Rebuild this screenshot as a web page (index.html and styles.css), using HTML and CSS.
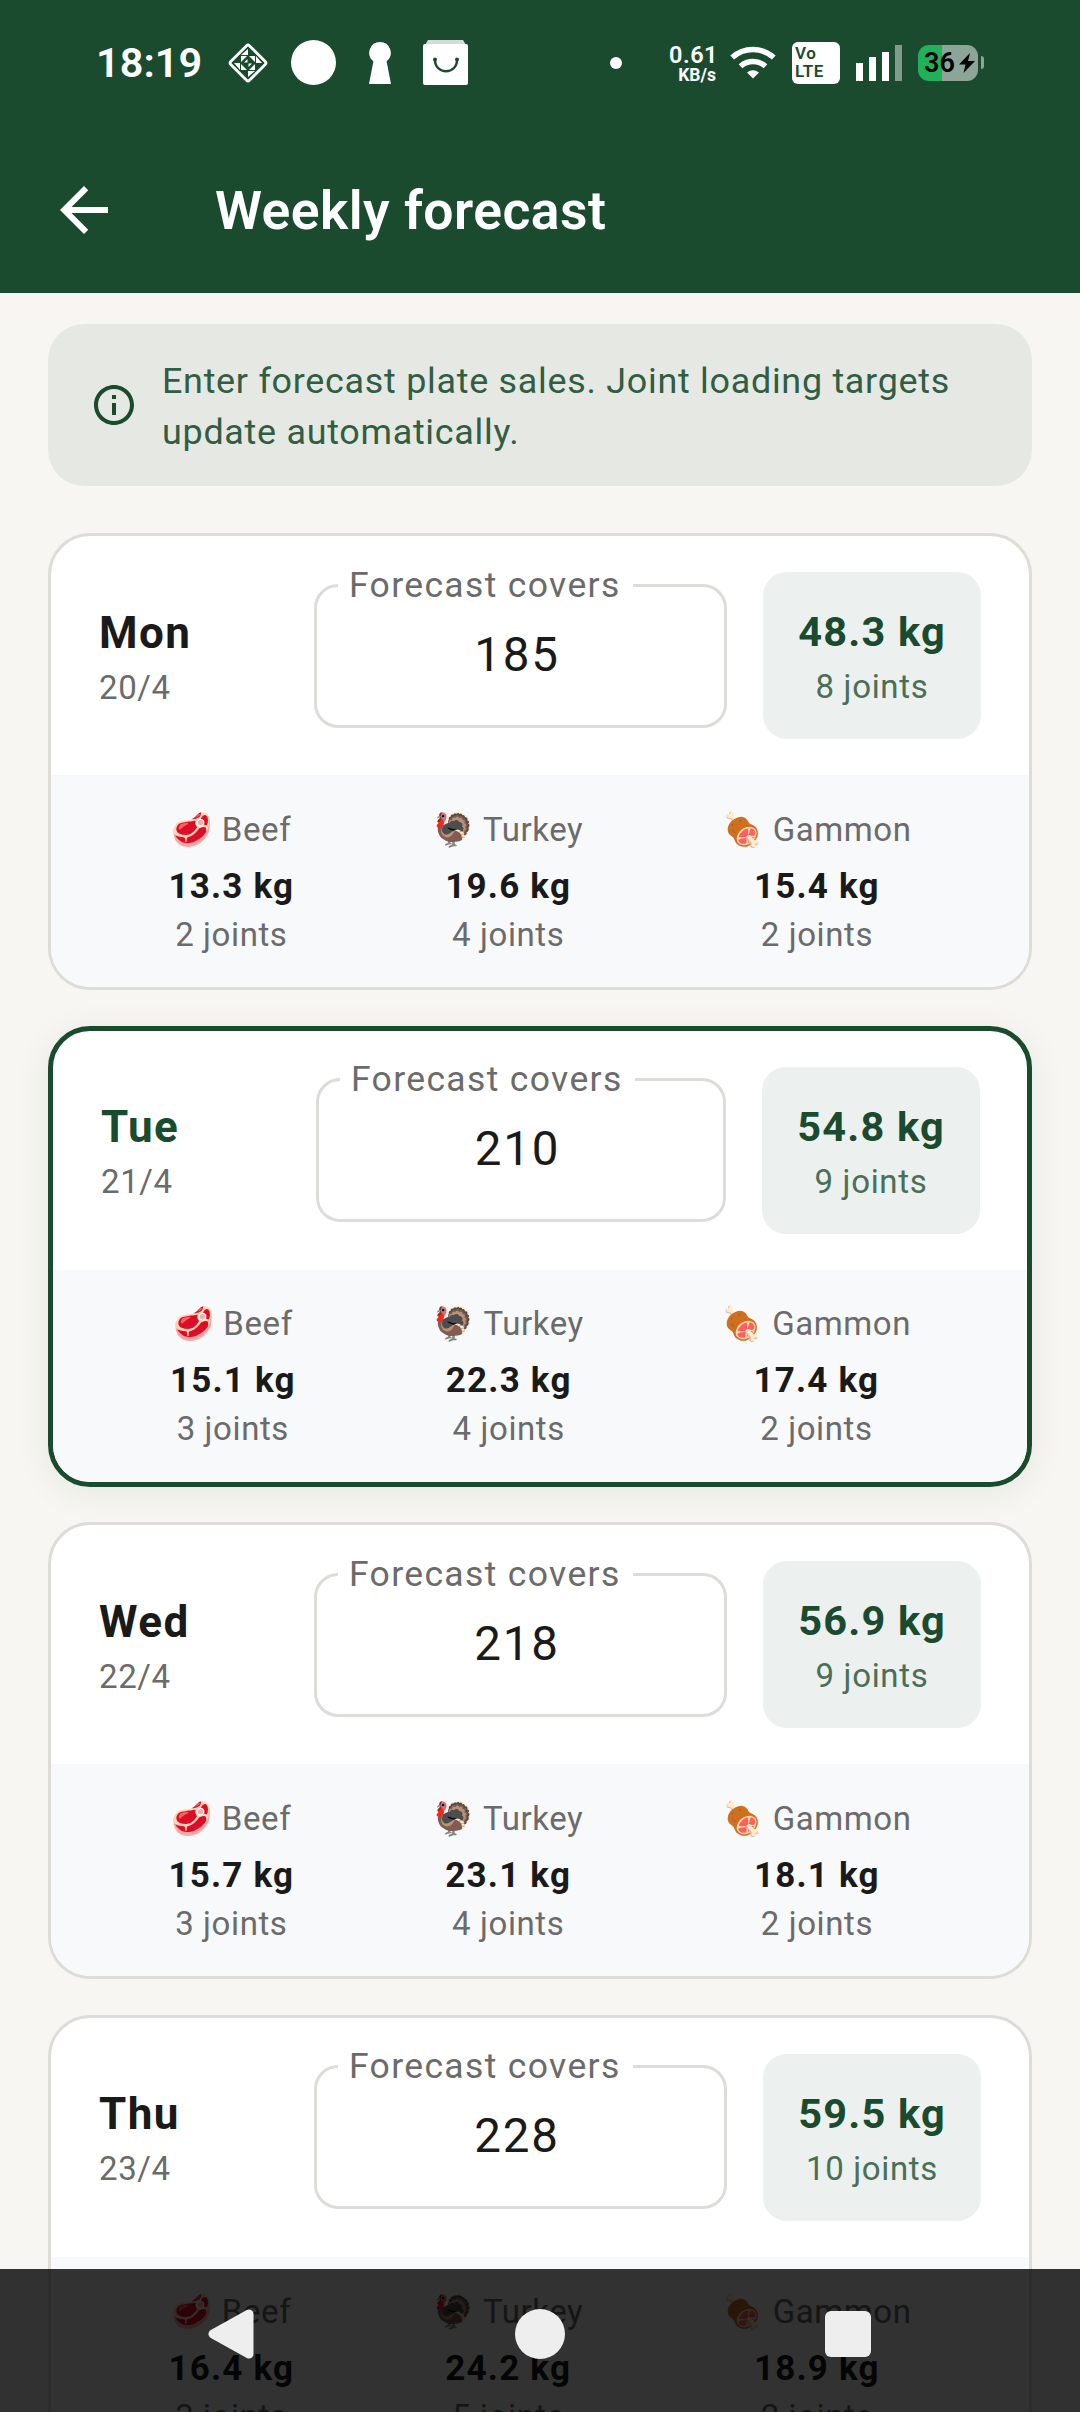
FILE: index.html
```
<!DOCTYPE html>
<html lang="en">

<head>
  <meta charset="UTF-8">
  <meta name="viewport" content="width=device-width, initial-scale=1.0">
  <title>Weekly forecast</title>
  <link rel="stylesheet" href="styles.css">
</head>

<body>
  <header>
    <div class="status">
      <span class="time">18:19</span>
      <svg class="s-diamond" width="42" height="42" viewBox="-21 -21 42 42">
        <rect x="-13.2" y="-13.2" width="26.4" height="26.4" rx="2" transform="rotate(45)" fill="none" stroke="#fff" stroke-width="2.8" />
        <path fill="#fff" d="M0-14v6h-7zM14 0H8v-7zM0 14V8h7zM-14 0h6v7zM-7-7h6l-6 6zM7-7v6L1-7zM7 7H1l6-6zM-7 7V1l6 6zM-4-.5l3.5-3.5v3.5zM4 .5L.5 4V.5z" />
      </svg>
      <i class="s-circle"></i>
      <svg class="s-key" width="22" height="42" viewBox="0 0 22 42">
        <path fill="#fff" d="M11 0a10.8 10.8 0 0 1 6.6 19.3L22 42H0l4.4-22.7A10.8 10.8 0 0 1 11 0z" />
      </svg>
      <svg class="s-bag" width="45" height="45" viewBox="0 0 45 45">
        <path fill="#d3dcd6" d="M5 0h35l3 5H2z" />
        <rect y="4" width="45" height="41" rx="2" fill="#fff" />
        <path d="M12 20c0 15 22 15 22 0" fill="none" stroke="#1b4b2f" stroke-width="2.4" />
        <circle cx="12" cy="19.5" r="2" fill="#1b4b2f" />
        <circle cx="34" cy="19.5" r="2" fill="#1b4b2f" />
      </svg>

      <i class="s-dot"></i>
      <div class="speed">
        <b>0.61</b>
        <small>KB/s</small>
      </div>
      <svg class="s-wifi" width="46" height="33" viewBox="0 0 46 33">
        <path d="M2.2 11.5a31 31 0 0 1 41.6 0" fill="none" stroke="#fff" stroke-width="5.5" />
        <path d="M10.5 20.2a19 19 0 0 1 25 0" fill="none" stroke="#fff" stroke-width="5.5" />
        <path d="M17 26.5q6-4.5 12 0l-6 6z" fill="#fff" />
      </svg>
      <div class="volte"><span>Vo</span><span>LTE</span></div>
      <svg class="s-signal" width="46" height="36" viewBox="0 0 46 36">
        <path fill="#fff" d="M0 18h7v18H0zM13 12h7v24h-7zM26 7h7v29h-7z" />
        <path fill="#fff" opacity=".45" d="M39 0h7v36h-7z" />
      </svg>
      <div class="battery">
        <span>36</span>
        <svg width="16" height="20" viewBox="0 0 16 20">
          <path d="M11 0L0 11.5h6.5L4.5 20 16 8H9z" />
        </svg>
      </div>
      <i class="battery-tip"></i>
    </div>
    <div class="bar">
      <svg width="72" height="72" viewBox="0 0 24 24">
        <path fill="#fff" d="M20 11H7.83l5.59-5.59L12 4l-8 8 8 8 1.41-1.41L7.83 13H20v-2z" />
      </svg>
      <h1>Weekly forecast</h1>
    </div>
  </header>

  <main>
    <div class="info">
      <svg width="48" height="48" viewBox="0 0 24 24">
        <path fill="#1b4b2f" d="M11 7h2v2h-2zm0 4h2v6h-2zm1-9C6.48 2 2 6.48 2 12s4.48 10 10 10 10-4.48 10-10S17.52 2 12 2zm0 18c-4.41 0-8-3.59-8-8s3.59-8 8-8 8 3.59 8 8-3.59 8-8 8z" />
      </svg>
      <p>Enter forecast plate sales. Joint loading targets update automatically.</p>
    </div>

    <div class="card">
      <div class="top">
        <div class="day">
          <h2>Mon</h2>
          <p>20/4</p>
        </div>
        <div class="field">
          <label>Forecast covers</label>
          <span>185</span>
        </div>
        <div class="total">
          <b>48.3 kg</b>
          <p>8 joints</p>
        </div>
      </div>
      <ul class="meats">
        <li><p>🥩 Beef</p><b>13.3 kg</b><p>2 joints</p></li>
        <li><p>🦃 Turkey</p><b>19.6 kg</b><p>4 joints</p></li>
        <li><p>🍖 Gammon</p><b>15.4 kg</b><p>2 joints</p></li>
      </ul>
    </div>

    <div class="card active">
      <div class="top">
        <div class="day">
          <h2>Tue</h2>
          <p>21/4</p>
        </div>
        <div class="field">
          <label>Forecast covers</label>
          <span>210</span>
        </div>
        <div class="total">
          <b>54.8 kg</b>
          <p>9 joints</p>
        </div>
      </div>
      <ul class="meats">
        <li><p>🥩 Beef</p><b>15.1 kg</b><p>3 joints</p></li>
        <li><p>🦃 Turkey</p><b>22.3 kg</b><p>4 joints</p></li>
        <li><p>🍖 Gammon</p><b>17.4 kg</b><p>2 joints</p></li>
      </ul>
    </div>

    <div class="card">
      <div class="top">
        <div class="day">
          <h2>Wed</h2>
          <p>22/4</p>
        </div>
        <div class="field">
          <label>Forecast covers</label>
          <span>218</span>
        </div>
        <div class="total">
          <b>56.9 kg</b>
          <p>9 joints</p>
        </div>
      </div>
      <ul class="meats">
        <li><p>🥩 Beef</p><b>15.7 kg</b><p>3 joints</p></li>
        <li><p>🦃 Turkey</p><b>23.1 kg</b><p>4 joints</p></li>
        <li><p>🍖 Gammon</p><b>18.1 kg</b><p>2 joints</p></li>
      </ul>
    </div>

    <div class="card">
      <div class="top">
        <div class="day">
          <h2>Thu</h2>
          <p>23/4</p>
        </div>
        <div class="field">
          <label>Forecast covers</label>
          <span>228</span>
        </div>
        <div class="total">
          <b>59.5 kg</b>
          <p>10 joints</p>
        </div>
      </div>
      <ul class="meats">
        <li><p>🥩 Beef</p><b>16.4 kg</b><p>3 joints</p></li>
        <li><p>🦃 Turkey</p><b>24.2 kg</b><p>5 joints</p></li>
        <li><p>🍖 Gammon</p><b>18.9 kg</b><p>2 joints</p></li>
      </ul>
    </div>
  </main>

  <nav>
    <svg width="46" height="50" viewBox="0 0 46 50">
      <path d="M41 5v40L5 25z" fill="#eee" stroke="#eee" stroke-width="9" stroke-linejoin="round" />
    </svg>
    <svg width="50" height="50" viewBox="0 0 50 50">
      <circle cx="25" cy="25" r="25" fill="#eee" />
    </svg>
    <svg width="46" height="46" viewBox="0 0 46 46">
      <rect width="46" height="46" rx="6" fill="#eee" />
    </svg>
  </nav>
</body>

</html>
```
FILE: styles.css
```
* {
  margin: 0;
  padding: 0;
  box-sizing: border-box;
}

ul {
  list-style: none;
}

svg {
  display: block;
  flex: none;
}

body {
  height: 2412px;
  overflow: hidden;
  background: #f7f6f2;
  color: #1a1a1a;
  font-family: Roboto, "Noto Color Emoji", sans-serif;
}

header {
  height: 293px;
  background: #1b4b2f;
  color: #fff;
}

/* status bar */
.status {
  display: flex;
  align-items: center;
  height: 125px;
  padding: 0 96px;
}

.time {
  width: 131px;
  font-size: 41.5px;
  font-weight: 600;
  line-height: 50px;
}

.s-circle {
  width: 45px;
  height: 45px;
  margin: 0 33px 0 22px;
  border-radius: 50%;
  background: #fff;
}

.s-bag {
  margin-left: 32px;
}

.s-dot {
  width: 12px;
  height: 12px;
  margin-left: auto;
  border-radius: 50%;
  background: #fff;
}

.speed {
  width: 96px;
  margin-right: 12px;
  text-align: right;
}

.speed b {
  display: block;
  padding-top: 5px;
  font-size: 23.5px;
  font-weight: 600;
  line-height: 20px;
  letter-spacing: .5px;
}

.speed small {
  display: block;
  padding-right: 2px;
  font-size: 17.5px;
  font-weight: 700;
  line-height: 20px;
}

.volte {
  width: 48px;
  height: 42px;
  margin: 0 16px;
  padding: 2px 0 0 3px;
  border-radius: 6px;
  background: #fff;
  color: #1b4b2f;
  font-size: 17px;
  font-weight: 600;
  line-height: 18.5px;
  letter-spacing: .6px;
}

.volte span {
  display: block;
}

.battery {
  display: flex;
  align-items: center;
  width: 60px;
  height: 36px;
  margin-left: 16px;
  padding-left: 6px;
  border-radius: 11px;
  background: linear-gradient(90deg, #1fb25a 24px, #8ca596 24px);
  color: #000;
  font-size: 27px;
  font-weight: 600;
  line-height: 36px;
}

.battery svg {
  margin-left: 4px;
}

.battery-tip {
  width: 3px;
  height: 13px;
  margin-left: 3px;
  border-radius: 0 3px 3px 0;
  background: #8ca596;
}

/* app bar */
.bar {
  display: flex;
  align-items: center;
  gap: 95px;
  height: 168px;
  padding: 2px 48px 0;
}

.bar h1 {
  font-size: 53.5px;
  font-weight: 600;
  letter-spacing: .45px;
}

main {
  padding: 31px 48px 0;
}

.info {
  display: flex;
  align-items: center;
  gap: 24px;
  height: 162px;
  margin-bottom: 47px;
  padding: 0 42px;
  border-radius: 36px;
  background: #e6e9e3;
}

.info p {
  padding-top: 3px;
  color: #315d43;
  font-size: 35.9px;
  line-height: 51px;
  letter-spacing: .72px;
}

/* day cards */
.card {
  margin-bottom: 35.6px;
  overflow: hidden;
  border: 3px solid #dedcd8;
  border-radius: 42px;
  background: #fff;
}

.card.active {
  border: 5px solid #1b4b2f;
  box-shadow: 0 6px 36px rgba(27, 50, 30, .07);
}

.active h2 {
  color: #1b4b2f;
}

.top {
  display: grid;
  grid-template-columns: 179px 1fr 218px;
  gap: 36px;
  align-items: center;
  height: 239px;
  padding: 0 48px;
}

.active .top {
  padding-right: 47px;
}

.day h2 {
  font-size: 44px;
  font-weight: 700;
  line-height: 64px;
  letter-spacing: 1.4px;
}

.day p {
  color: #6b6b6b;
  font-size: 33px;
  line-height: 46px;
  letter-spacing: .6px;
}

.field {
  position: relative;
  height: 144px;
  border: 3px solid #dedcd8;
  border-radius: 24px;
  padding-right: 7px;
  text-align: center;
}

.field label {
  position: absolute;
  top: -25px;
  left: 21px;
  padding: 0 12px 0 11px;
  background: #fff;
  color: #6b6b6b;
  font-size: 35.5px;
  line-height: 46px;
  letter-spacing: 1.35px;
  white-space: nowrap;
}

.field span {
  font-size: 47.5px;
  line-height: 136px;
  letter-spacing: 1.8px;
}

.total {
  height: 167px;
  padding-top: 29px;
  border-radius: 24px;
  background: #ecf0ee;
  color: #1b4b2f;
  text-align: center;
}

.total b {
  display: block;
  font-size: 41.5px;
  line-height: 62px;
  letter-spacing: 1.2px;
}

.total p {
  color: #496f58;
  font-size: 33px;
  line-height: 47px;
  letter-spacing: .67px;
}

.meats {
  display: flex;
  justify-content: space-around;
  height: 212px;
  padding: 30px 48px;
  background: #f8f9fb;
  text-align: center;
}

.active .meats {
  padding-top: 29px;
  padding-right: 47px;
}

.meats p {
  color: #6b6b6b;
  font-size: 33px;
  line-height: 46px;
  letter-spacing: .6px;
}

.meats p:first-child {
  margin-bottom: 7px;
  line-height: 50px;
}

.meats b {
  display: block;
  font-size: 35px;
  line-height: 50px;
  letter-spacing: 1.2px;
}

/* system navigation over the page */
nav {
  position: fixed;
  left: 0;
  right: 0;
  bottom: 0;
  display: flex;
  align-items: center;
  justify-content: space-between;
  height: 143px;
  padding: 0 209px 13px 208px;
  background: rgba(0, 0, 0, .8);
}
```
